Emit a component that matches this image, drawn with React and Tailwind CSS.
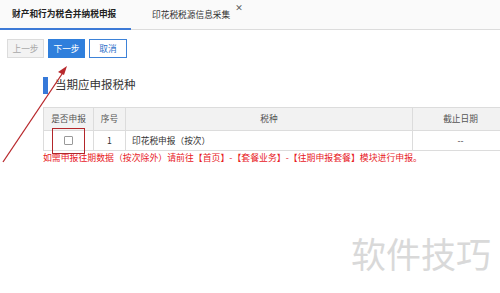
import React from "react";

export default function App() {
  const font = { fontFamily: '"Noto Sans CJK SC", "Noto Sans", sans-serif' };
  return (
    <div className="relative w-[500px] h-[293px] overflow-hidden bg-white text-[#333]" style={font}>
      {/* tabs */}
      <div className="flex h-[30px] bg-[#fafafa] border-b border-[#dcdcdc]">
        <div className="w-[131px] h-[30px] border-b-2 border-[#3d7ad6] flex items-center pl-[12px] text-[8.7px] font-bold text-[#222]">
          财产和行为税合并纳税申报
        </div>
        <div className="relative flex items-center pl-[21px] text-[8.7px] text-[#333]">
          印花税税源信息采集
          <span className="absolute left-[104px] top-[3px] text-[8px] leading-[10px] font-bold text-[#555]">×</span>
        </div>
      </div>

      {/* buttons */}
      <div className="flex gap-[4px] pl-[7px] mt-[9px]">
        <div className="w-[37px] h-[19px] flex items-center justify-center text-[8.7px] border border-[#dcdcdc] bg-[#f3f3f3] text-[#a8a8a8]">上一步</div>
        <div className="w-[37px] h-[19px] flex items-center justify-center text-[8.7px] bg-[#2f7fdc] text-white border border-[#2f7fdc]">下一步</div>
        <div className="w-[38px] h-[19px] flex items-center justify-center text-[8.7px] border border-[#3d82d8] bg-white text-[#2f72c9]">取消</div>
      </div>

      {/* section title */}
      <div className="flex items-center mt-[18px] ml-[43px] h-[18px]">
        <div className="w-[5px] h-[17px] bg-[#3679d9]" />
        <div className="ml-[7px] text-[11.5px] text-[#333]">当期应申报税种</div>
      </div>

      {/* table */}
      <div className="ml-[43px] mt-[13px] w-[470px]">
        <div className="grid grid-cols-[50px_32px_287px_101px] h-[24px] bg-[#f2f2f2] border border-[#dcdcdc] text-[8.7px] text-[#555]">
          <div className="flex items-center justify-center border-r border-[#dcdcdc]">是否申报</div>
          <div className="flex items-center justify-center border-r border-[#dcdcdc]">序号</div>
          <div className="flex items-center justify-center border-r border-[#dcdcdc]">税种</div>
          <div className="flex items-center justify-center pr-[6px]">截止日期</div>
        </div>
        <div className="grid grid-cols-[50px_32px_287px_101px] h-[20px] border-x border-b border-[#dcdcdc] text-[8.7px] text-[#333]">
          <div className="flex items-center justify-center border-r border-[#dcdcdc]">
            <div className="w-[9px] h-[9px] border border-[#999] rounded-[1px] bg-white" />
          </div>
          <div className="flex items-center justify-center border-r border-[#dcdcdc]">1</div>
          <div className="flex items-center pl-[6px] border-r border-[#dcdcdc]">印花税申报（按次）</div>
          <div className="flex items-center justify-center pr-[6px]">--</div>
        </div>
        <div className="mt-[1px] text-[8.9px] leading-[12px] text-[#e8201e] whitespace-nowrap">
          如需申报往期数据（按次除外）请前往【首页】-【套餐业务】-【往期申报套餐】模块进行申报。
        </div>
      </div>

      {/* red annotation box */}
      <div className="absolute left-[52px] top-[128px] w-[33px] h-[26px] border border-[#b3262a]" />

      {/* arrow */}
      <svg className="absolute left-0 top-0" width="500" height="293" viewBox="0 0 500 293">
        <line x1="3" y1="162" x2="64" y2="71" stroke="#b8282c" strokeWidth="1.3" />
        <polygon points="67,66 58,72 64,75" fill="#b8282c" />
      </svg>

      {/* watermark */}
      <div className="absolute left-[351px] top-[233px] text-[35px] leading-[40px] text-[#d9d9d9]">软件技巧</div>
    </div>
  );
}
